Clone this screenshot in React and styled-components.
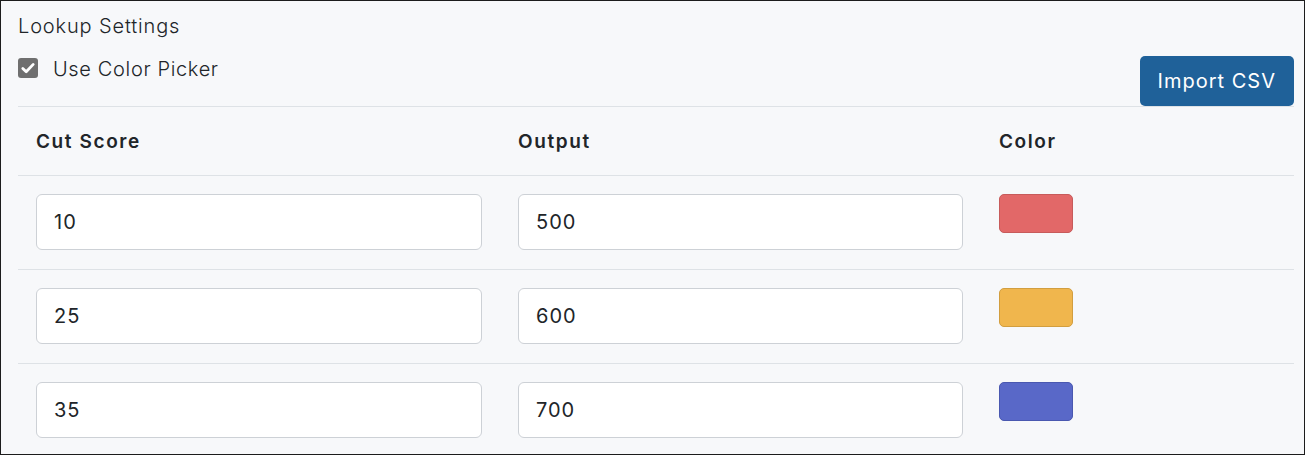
import React from "react";
import styled, { createGlobalStyle } from "styled-components";

const GlobalStyle = createGlobalStyle`
  html, body {
    margin: 0;
    padding: 0;
    background: #ffffff;
  }
  * {
    box-sizing: border-box;
  }
`;

const Frame = styled.div`
  width: 1305px;
  height: 455px;
  border: 1px solid #1c1c1c;
  background: #f7f8fa;
  padding: 0 10px 0 17px;
  overflow: hidden;
  font-family: "Inter", "Open Sans", sans-serif;
  color: #212529;
`;

const Header = styled.div`
  display: flex;
  justify-content: space-between;
  align-items: flex-start;
  padding-top: 11px;
  border-bottom: 1px solid #dee2e6;
`;

const Title = styled.div`
  font-size: 20px;
  line-height: 28px;
  font-weight: 300;
  letter-spacing: 0.85px;
`;

const CheckRow = styled.label`
  display: flex;
  align-items: center;
  gap: 15px;
  margin-top: 15px;
  font-size: 20px;
  line-height: 28px;
  font-weight: 300;
  letter-spacing: 0.65px;
`;

const Box = styled.span`
  width: 20px;
  height: 20px;
  margin-bottom: 3px;
  border-radius: 3px;
  background: #6f6f6f;
  display: inline-flex;
  align-items: center;
  justify-content: center;
`;

const Button = styled.button`
  margin-top: 44px;
  height: 50px;
  padding: 0 18px;
  border: none;
  border-radius: 5px;
  background: #1f6199;
  color: #ffffff;
  font-family: inherit;
  font-size: 20px;
  font-weight: 400;
  letter-spacing: 1px;
`;

const Row = styled.div`
  display: grid;
  grid-template-columns: 482px 481px 1fr;
  border-bottom: 1px solid #dee2e6;
  padding: ${(p) => (p.$head ? "0" : "18px 0 19px")};
  height: ${(p) => (p.$head ? "69px" : "94px")};
  align-items: ${(p) => (p.$head ? "center" : "start")};
`;

const HeadCell = styled.div`
  padding: 0 18px;
  font-size: 19px;
  font-weight: 600;
  letter-spacing: 1.6px;
`;

const Cell = styled.div`
  padding: 0 18px;
`;

const Input = styled.input`
  width: 100%;
  height: 56px;
  border: 1px solid #cdd1d6;
  border-radius: 6px;
  background: #ffffff;
  padding: 0 17px;
  font-family: inherit;
  font-size: 20px;
  letter-spacing: 1px;
  color: #212529;
  outline: none;
`;

const Swatch = styled.div`
  width: 74px;
  height: 39px;
  border-radius: 5px;
  background: ${(p) => p.$color};
  border: 1px solid ${(p) => p.$edge};
`;

const rows = [
  { cut: "10", out: "500", color: "#e26868", edge: "#c75b5b" },
  { cut: "25", out: "600", color: "#f0b64d", edge: "#d29e3f" },
  { cut: "35", out: "700", color: "#5968c8", edge: "#4a58b0" },
];

const App = () => {
  return (
    <Frame>
      <GlobalStyle />
      <Header>
        <div>
          <Title>Lookup Settings</Title>
          <CheckRow>
            <Box>
              <svg width="16" height="16" viewBox="0 0 16 16">
                <path
                  d="M2.8 8.4l3.4 3.4L13.2 4.4"
                  fill="none"
                  stroke="#fff"
                  strokeWidth="2.8"
                  strokeLinecap="round"
                  strokeLinejoin="round"
                />
              </svg>
            </Box>
            Use Color Picker
          </CheckRow>
        </div>
        <Button>Import CSV</Button>
      </Header>
      <Row $head>
        <HeadCell>Cut Score</HeadCell>
        <HeadCell>Output</HeadCell>
        <HeadCell>Color</HeadCell>
      </Row>
      {rows.map((r) => (
        <Row key={r.cut}>
          <Cell>
            <Input defaultValue={r.cut} />
          </Cell>
          <Cell>
            <Input defaultValue={r.out} />
          </Cell>
          <Cell>
            <Swatch $color={r.color} $edge={r.edge} />
          </Cell>
        </Row>
      ))}
    </Frame>
  );
};

export default App;
